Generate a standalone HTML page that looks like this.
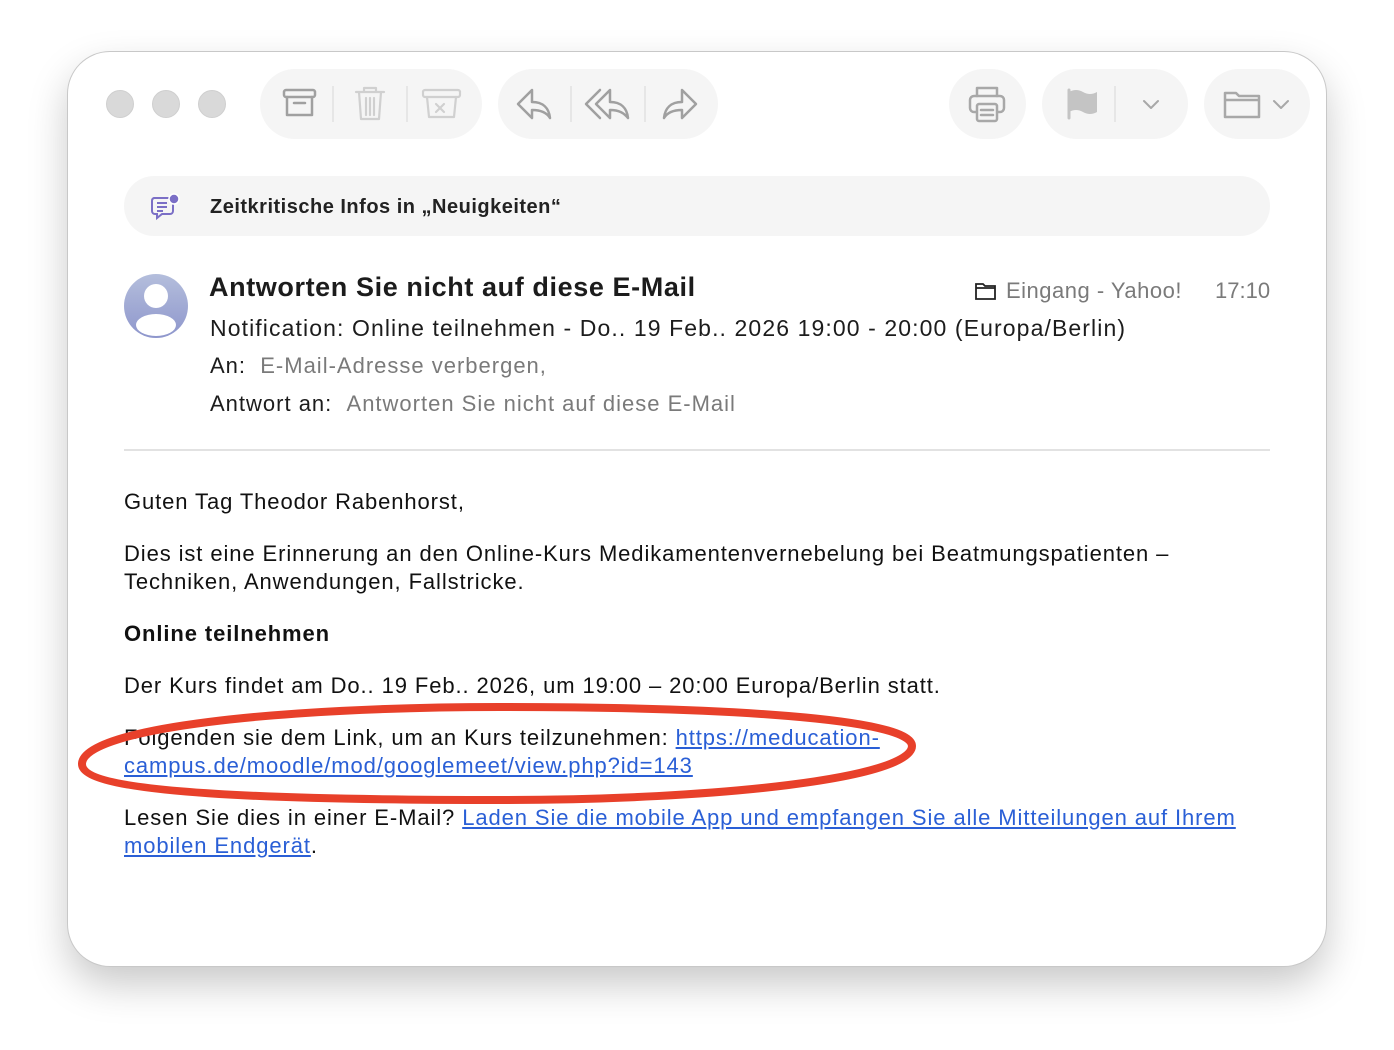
<!DOCTYPE html>
<html><head><meta charset="utf-8"><style>
*{margin:0;padding:0;box-sizing:border-box}
body{width:1394px;height:1050px;background:#fff;position:relative;overflow:hidden;font-family:"Liberation Sans",sans-serif}
.win{position:absolute;left:68px;top:52px;width:1258px;height:914px;border-radius:42px;background:#fff;box-shadow:0 0 0 1px #c8c8c8,0 18px 40px rgba(0,0,0,.22)}
.a{position:absolute;white-space:nowrap}
.dot{position:absolute;top:90px;width:28px;height:28px;border-radius:50%;background:#d9d9d9;border:1px solid #cfcfcf}
.pill{position:absolute;top:69px;height:70px;background:#f5f5f5;border-radius:35px}
.sep{position:absolute;top:86px;width:2px;height:36px;background:#e6e6e6}
.t{font-size:22px;color:#111;letter-spacing:0.9px}
.g{color:#7a7a7a}
a{color:#2a5fd6;text-decoration:underline}
</style></head><body>
<div class="win"></div>
<div class="dot" style="left:106px"></div><div class="dot" style="left:152px"></div><div class="dot" style="left:198px"></div>
<div class="pill" style="left:260px;width:222px"></div>
<div class="pill" style="left:498px;width:220px"></div>
<div class="pill" style="left:949px;width:77px"></div>
<div class="pill" style="left:1042px;width:146px"></div>
<div class="pill" style="left:1204px;width:106px"></div>
<div class="sep" style="left:332px"></div><div class="sep" style="left:406px"></div>
<div class="sep" style="left:570px"></div><div class="sep" style="left:644px"></div>
<div class="sep" style="left:1114px"></div>
<svg class="a" style="left:0;top:0" width="1394" height="160" fill="none" stroke-linecap="round" stroke-linejoin="round">
<g stroke="#a0a0a0" stroke-width="2.5">
<rect x="284" y="90" width="31" height="7" rx="2"/><path d="M287 97v18h25V97M294 103h11"/>
</g>
<g stroke="#d0d0d0" stroke-width="2.2">
<path d="M356 92h28M364 92v-4h12v4M359 92l2 27h18l2-27M366 98v17M370 98v17M374 98v17"/>
<rect x="423" y="90" width="37" height="7" rx="2"/><path d="M427 97l2 20h25l2-20M436 104l8 8M444 104l-8 8"/>
</g>
<g stroke="#a0a0a0" stroke-width="2.5">
<path d="M532 90l-14 14 14 14v-8c10 0 15 3 18 8-1-10-7-16-18-16z"/>
<path d="M600 90l-14 14 14 14M610 90l-14 14 14 14v-8c9 0 14 3 18 8-1-10-7-16-18-16z"/>
<path d="M682 90l14 14-14 14v-8c-10 0-15 3-18 8 1-10 7-16 18-16z"/>
</g>
<g stroke="#a8a8a8" stroke-width="2.5">
<path d="M977 96v-8h20v8"/><rect x="970" y="96" width="34" height="16" rx="4"/><rect x="977" y="104" width="20" height="17" rx="2" fill="#f5f5f5"/><path d="M981 110h12M981 115h12"/>
</g>
<path d="M1069 92q7-4 14 0t14 0v20q-7 4-14 0t-14 0z" fill="#c4c4c4"/><path d="M1069 90v28" stroke="#c4c4c4" stroke-width="3"/>
<path d="M1144 101l7 7 7-7M1274 101l7 7 7-7" stroke="#a8a8a8" stroke-width="2"/>
<path d="M1225 93h11l3 3h20v21h-34z M1225 100h34" stroke="#a8a8a8" stroke-width="2.5"/>
</svg>
<div class="a" style="left:124px;top:176px;width:1146px;height:60px;background:#f5f5f5;border-radius:30px"></div>
<svg class="a" style="left:150px;top:193px" width="32" height="28" fill="none" stroke="#7b6fc6" stroke-width="2"><path d="M4 5h16a3 3 0 0 1 3 3v10a3 3 0 0 1-3 3H12l-5 4v-4H5a3 3 0 0 1-3-3V8a3 3 0 0 1 2-3zM7 10h10M7 14h10M7 18h6"/><circle cx="24" cy="6" r="5" fill="#7b6fc6" stroke="#fff" stroke-width="1.5"/></svg>
<div class="a" style="left:210px;top:196px;font-size:20px;font-weight:bold;color:#222;letter-spacing:.5px">Zeitkritische Infos in „Neuigkeiten“</div>
<div class="a" style="left:124px;top:274px;width:64px;height:64px;border-radius:50%;background:linear-gradient(#b4bedc,#8e96cc);overflow:hidden">
<div class="a" style="left:20px;top:10px;width:24px;height:24px;border-radius:50%;background:#fff"></div>
<div class="a" style="left:12px;top:40px;width:40px;height:22px;border-radius:50%;background:#fff"></div></div>
<div class="a" style="left:209px;top:272px;font-size:27px;font-weight:bold;color:#1c1c1c;letter-spacing:0.6px">Antworten Sie nicht auf diese E-Mail</div>
<svg class="a" style="left:975px;top:282px" width="22" height="18" fill="none" stroke="#222" stroke-width="1.8"><path d="M1 2h7l2 2h10v13H1zM1 6h19"/></svg>
<div class="a g" style="left:1006px;top:278px;font-size:22px;letter-spacing:0.5px">Eingang - Yahoo!</div>
<div class="a g" style="left:1215px;top:278px;font-size:22px">17:10</div>
<div class="a" style="left:210px;top:315px;font-size:23px;color:#1c1c1c;letter-spacing:1.1px">Notification: Online teilnehmen - Do.. 19 Feb.. 2026 19:00 - 20:00 (Europa/Berlin)</div>
<div class="a" style="left:210px;top:353px;font-size:22px;color:#1c1c1c;letter-spacing:1px">An:&nbsp;&nbsp;<span class="g">E-Mail-Adresse verbergen,</span></div>
<div class="a" style="left:210px;top:391px;font-size:22px;color:#1c1c1c;letter-spacing:1px">Antwort an:&nbsp;&nbsp;<span class="g">Antworten Sie nicht auf diese E-Mail</span></div>
<div class="a" style="left:124px;top:449px;width:1146px;height:2px;background:#e2e2e2"></div>
<div class="a t" style="left:124px;top:489px">Guten Tag Theodor Rabenhorst,</div>
<div class="a t" style="left:124px;top:541px">Dies ist eine Erinnerung an den Online-Kurs Medikamentenvernebelung bei Beatmungspatienten –</div>
<div class="a t" style="left:124px;top:569px">Techniken, Anwendungen, Fallstricke.</div>
<div class="a t" style="left:124px;top:621px;font-weight:bold">Online teilnehmen</div>
<div class="a t" style="left:124px;top:673px">Der Kurs findet am Do.. 19 Feb.. 2026, um 19:00 – 20:00 Europa/Berlin statt.</div>
<div class="a t" style="left:124px;top:725px">Folgenden sie dem Link, um an Kurs teilzunehmen: <a>https://meducation-</a></div>
<div class="a t" style="left:124px;top:753px"><a>campus.de/moodle/mod/googlemeet/view.php?id=143</a></div>
<div class="a t" style="left:124px;top:805px">Lesen Sie dies in einer E-Mail? <a>Laden Sie die mobile App und empfangen Sie alle Mitteilungen auf Ihrem</a></div>
<div class="a t" style="left:124px;top:833px"><a>mobilen Endgerät</a>.</div>
<svg class="a" style="left:0;top:0" width="1394" height="1050"><path d="M82 764 C82 728 280 707 500 707 C720 707 912 718 912 746 C912 778 720 800 500 800 C280 800 82 794 82 764 Z" fill="none" stroke="#e8402a" stroke-width="8"/></svg>
</body></html>
